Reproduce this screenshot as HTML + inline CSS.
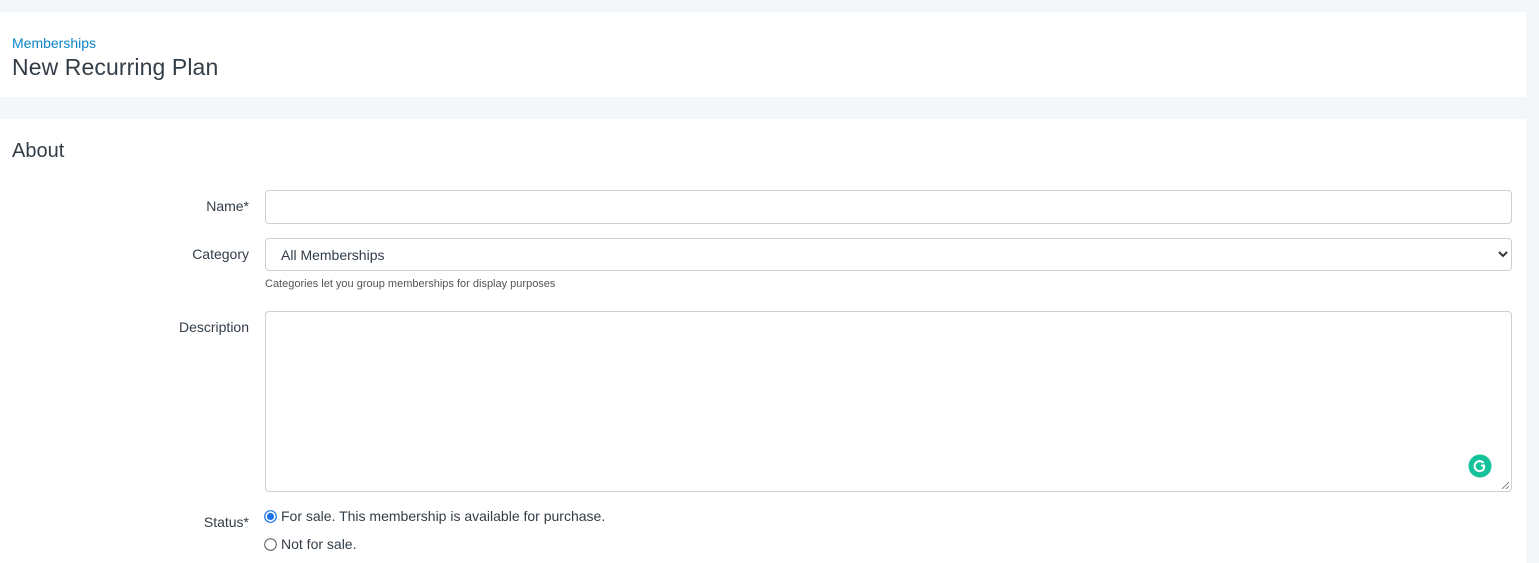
<!DOCTYPE html>
<html><head><style>
body{margin:0;width:1539px;height:563px;background:#f4f7fa;font-family:"Liberation Sans",sans-serif;color:#333d47;overflow:hidden;position:relative}
.p{position:absolute;left:0;width:1526px;background:#fff}
.abs{position:absolute}
.lbl{position:absolute;right:1290px;font-size:14px;color:#333d47;text-align:right}
.box{position:absolute;left:265px;width:1245px;border:1px solid #ccd0d5;border-radius:4px;background:#fff}
</style></head><body>
<div class="p" style="top:12px;height:85px"></div>
<div class="p" style="top:119px;height:444px"></div>
<div class="abs" style="left:12px;top:35px;font-size:14px;color:#0a86c6">Memberships</div>
<div class="abs" style="left:12px;top:54px;font-size:23px;color:#333d47;letter-spacing:0.1px">New Recurring Plan</div>
<div class="abs" style="left:12px;top:140px;font-size:20px;color:#333d47">About</div>
<div class="lbl" style="top:198px">Name*</div>
<div class="box" style="top:190px;height:32px"></div>
<div class="lbl" style="top:246px">Category</div>
<div class="box" style="top:238px;height:31px"><span class="abs" style="left:15px;top:8px;font-size:14px">All Memberships</span>
<svg class="abs" style="right:3px;top:11px" width="10" height="8" viewBox="0 0 10 8"><path d="M1 2l4 4 4-4" stroke="#333" stroke-width="2" fill="none"/></svg></div>
<div class="abs" style="left:265px;top:278px;font-size:11px;color:#555">Categories let you group memberships for display purposes</div>
<div class="lbl" style="top:319px">Description</div>
<div class="box" style="top:311px;height:179px">
<svg class="abs" style="left:1202px;top:142px" width="24" height="24" viewBox="0 0 24 24"><circle cx="12" cy="12" r="11.5" fill="#15c39a"/><path d="M15.5 9A5 5 0 1 0 16 14.5M16 14.5v-3h-3" stroke="#fff" stroke-width="2" fill="none"/></svg>
<svg class="abs" style="right:2px;bottom:2px" width="8" height="8"><path d="M8 1L1 8M8 5L5 8" stroke="#888"/></svg></div>
<div class="lbl" style="top:514px">Status*</div>
<svg class="abs" style="left:264px;top:510px" width="13" height="13"><circle cx="6.5" cy="6.5" r="5.8" fill="#fff" stroke="#1a73e8" stroke-width="1.2"/><circle cx="6.5" cy="6.5" r="3.6" fill="#1a73e8"/></svg>
<div class="abs" style="left:281px;top:508px;font-size:14px">For sale. This membership is available for purchase.</div>
<svg class="abs" style="left:264px;top:538px" width="13" height="13"><circle cx="6.5" cy="6.5" r="5.8" fill="#fff" stroke="#555" stroke-width="1"/></svg>
<div class="abs" style="left:281px;top:536px;font-size:14px">Not for sale.</div>
</body></html>
